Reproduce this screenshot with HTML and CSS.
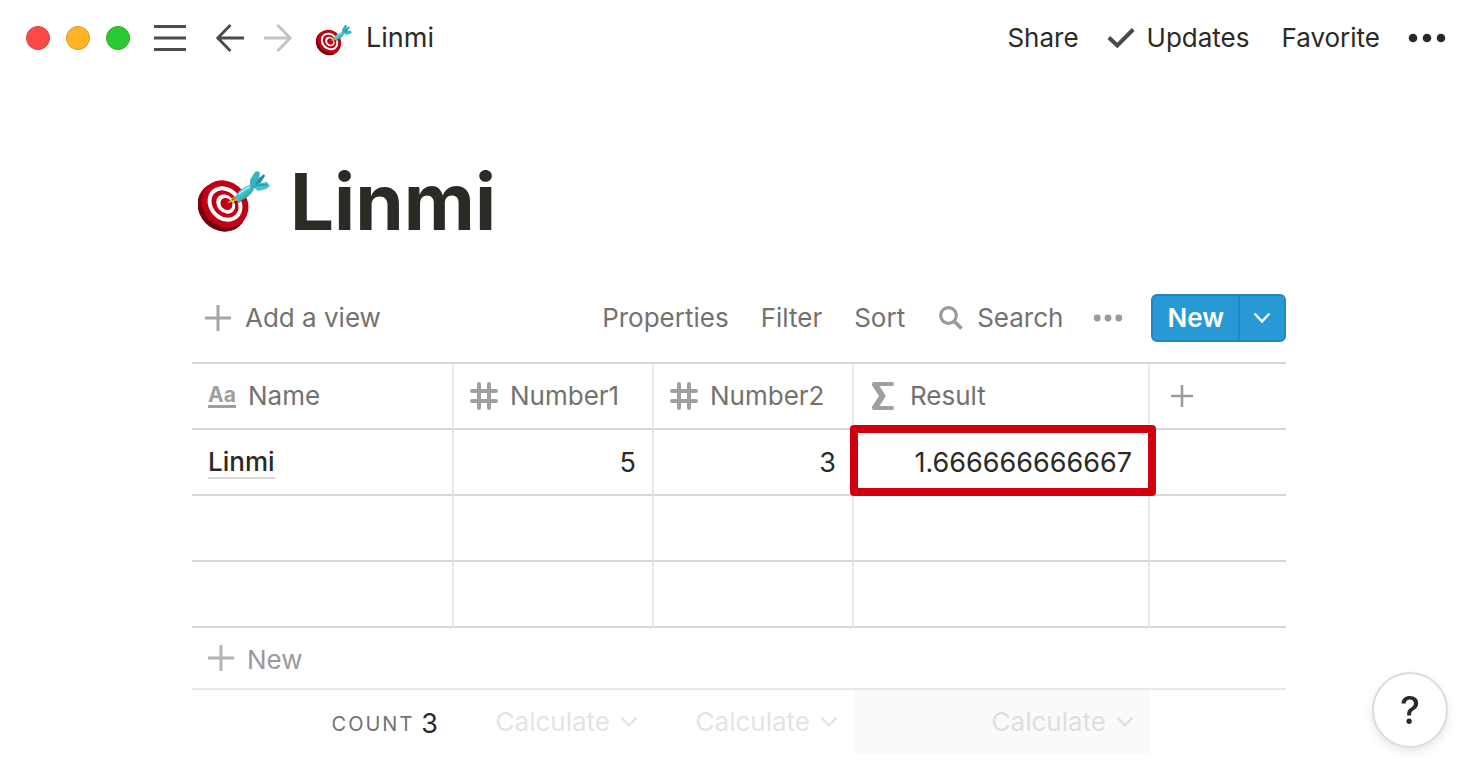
FILE: index.html
```html
<!DOCTYPE html>
<html lang="en">
<head>
<meta charset="utf-8">
<title>Linmi</title>
<meta name="viewport" content="width=device-width, initial-scale=1">
<link rel="stylesheet" href="styles.css">
</head>
<body>
<svg class="sprite" aria-hidden="true">
  <defs>
    <linearGradient id="rim" x1="0" y1="0" x2="1" y2="1"><stop offset="0" stop-color="#a80012"/><stop offset="1" stop-color="#5f0008"/></linearGradient>
    <linearGradient id="barrel" x1="0" y1="0" x2="1" y2="1"><stop offset="0" stop-color="#6fe0e6"/><stop offset=".5" stop-color="#3fbecb"/><stop offset="1" stop-color="#1c7f90"/></linearGradient>
    <symbol id="target" viewBox="0 0 72 62">
      <ellipse cx="24" cy="36" rx="26" ry="23" transform="rotate(47 24 36)" fill="url(#rim)"/>
      <g transform="rotate(47 27 33)">
        <ellipse cx="27" cy="33" rx="25" ry="22" fill="#c00015"/>
        <ellipse cx="27" cy="33" rx="19" ry="16" fill="#fff"/>
        <ellipse cx="27" cy="33" rx="15" ry="12" fill="#c00015"/>
        <ellipse cx="27.500" cy="32.500" rx="10.500" ry="8.500" fill="#fff"/>
        <ellipse cx="28" cy="32" rx="6.500" ry="5.500" fill="#c00015"/>
      </g>
      <path d="M30 33 48 25 42 32Z" fill="#7a0010" opacity=".45"/>
      <path d="M29 32.500 37 24.500 42 29 36 30Z" fill="#f0b51c"/>
      <path d="M34 29 40 25" stroke="#8a5a08" stroke-width="1.500"/>
      <path d="M37 28C38 21 45 16 52 14L56 18C54 23 46 30 40 30Z" fill="url(#barrel)"/>
      <path d="M52 15 52 9 57 1Q60 -1 62 2L60 11 55 17Z" fill="#38b4c1"/>
      <path d="M57 14 61 7 66 3 67 5 61 14Z" fill="#238d9b"/>
      <path d="M55 16 61 12 69 11 72 15 68 18 60 20Z" fill="#43c2cc"/>
      <path d="M54 17 60 14 69 14" fill="none" stroke="#1c8492" stroke-width="1"/>
      <path d="M41 23Q46 18 52 16" fill="none" stroke="#a2f2f2" stroke-width="1.500"/>
    </symbol>
    <symbol id="plus" viewBox="0 0 26 26"><path d="M13 0V26M0 13H26" stroke="currentColor" stroke-width="3"/></symbol>
    <symbol id="hash" viewBox="0 0 28 28"><path d="M9 2V26M19 2V26M2 9H26M2 19H26" stroke="currentColor" stroke-width="4" stroke-linecap="round"/></symbol>
    <symbol id="chevron" viewBox="0 0 18 12"><path d="M1.500 1.500 9 9.500 16.500 1.500" fill="none" stroke="currentColor" stroke-width="2.500"/></symbol>
    <symbol id="dots" viewBox="0 0 36 10"><circle cx="4.500" cy="5" r="4.300"/><circle cx="18" cy="5" r="4.300"/><circle cx="31.500" cy="5" r="4.300"/></symbol>
  </defs>
</svg>

<header class="topbar">
  <div class="lights">
    <button class="light light-close" aria-label="Close"></button>
    <button class="light light-minimize" aria-label="Minimize"></button>
    <button class="light light-zoom" aria-label="Zoom"></button>
  </div>
  <button class="menu" aria-label="Menu"><svg width="32" height="28" viewBox="0 0 32 28"><path d="M0 2.500H32M0 14H32M0 25.500H32" stroke="#4d4c46" stroke-width="3"/></svg></button>
  <div class="history">
    <button aria-label="Back"><svg width="28" height="28" viewBox="0 0 28 28"><path d="M28 14H2M14.500 1 1.800 14 14.500 27" fill="none" stroke="#4a4a48" stroke-width="2.800"/></svg></button>
    <button aria-label="Forward"><svg width="28" height="28" viewBox="0 0 28 28"><path d="M0 14H26M13.500 1 26.200 14 13.500 27" fill="none" stroke="#c3c3c2" stroke-width="2.800"/></svg></button>
  </div>
  <a class="crumb" href="#"><svg class="crumb-icon"><use href="#target"/></svg>Linmi</a>
  <nav class="actions">
    <button>Share</button>
    <button class="updates"><svg width="28" height="22" viewBox="0 0 28 22"><path d="M1.800 10.500 10.300 18.500 26.200 2.500" fill="none" stroke="#4a4a48" stroke-width="4"/></svg>Updates</button>
    <button>Favorite</button>
    <button class="more" aria-label="More"><svg width="38" height="10" viewBox="0 0 38 10"><circle cx="5" cy="5" r="4.300"/><circle cx="19" cy="5" r="4.300"/><circle cx="33" cy="5" r="4.300"/></svg></button>
  </nav>
</header>

<main class="page">
  <div class="heading">
    <svg class="heading-icon" aria-hidden="true"><use href="#target"/></svg>
    <h1>Linmi</h1>
  </div>

  <div class="toolbar">
    <button class="add-view"><svg class="plus"><use href="#plus"/></svg>Add a view</button>
    <div class="tools">
      <button>Properties</button>
      <button>Filter</button>
      <button>Sort</button>
      <button class="search"><svg width="24" height="24" viewBox="0 0 24 24"><circle cx="9.500" cy="9.500" r="7.800" fill="none" stroke="#9b9a97" stroke-width="3.200"/><path d="M15 15 22.500 22.500" stroke="#9b9a97" stroke-width="3.800"/></svg>Search</button>
      <button class="view-more" aria-label="View options"><svg width="30" height="8"><use href="#dots"/></svg></button>
      <div class="split">
        <button class="split-main">New</button>
        <button class="split-menu" aria-label="Templates"><svg width="18" height="12"><use href="#chevron"/></svg></button>
      </div>
    </div>
  </div>

  <table class="grid">
    <colgroup><col class="col-name"><col class="col-number"><col class="col-number"><col class="col-result"><col></colgroup>
    <thead>
      <tr>
        <th><span class="field"><span class="aa" aria-hidden="true">Aa</span>Name</span></th>
        <th><span class="field"><svg class="type"><use href="#hash"/></svg>Number1</span></th>
        <th><span class="field"><svg class="type"><use href="#hash"/></svg>Number2</span></th>
        <th><span class="field"><svg class="type" viewBox="0 0 28 28"><path d="M4 0H22Q24 0 24 2 24 4 22 4H9.500L15.500 13.500V14.500L9.500 24H22Q24 24 24 26 24 28 22 28H4Q2 28 2 26V24.500L9 14 2 3.500V2Q2 0 4 0Z" fill="currentColor"/></svg>Result</span></th>
        <th><button class="add-column" aria-label="Add a property"><svg width="22" height="22"><use href="#plus"/></svg></button></th>
      </tr>
    </thead>
    <tbody>
      <tr><td><a class="title" href="#">Linmi</a></td><td class="num">5</td><td class="num">3</td><td class="num marked">1.666666666667</td><td></td></tr>
      <tr><td></td><td></td><td></td><td></td><td></td></tr>
      <tr><td></td><td></td><td></td><td></td><td></td></tr>
    </tbody>
    <tfoot>
      <tr class="new-row"><td colspan="5"><button><svg class="plus"><use href="#plus"/></svg><span>New</span></button></td></tr>
      <tr class="totals">
        <td><span class="count"><span class="count-label">COUNT</span><span class="count-value">3</span></span></td>
        <td><button class="calc">Calculate<svg width="18" height="12"><use href="#chevron"/></svg></button></td>
        <td><button class="calc">Calculate<svg width="18" height="12"><use href="#chevron"/></svg></button></td>
        <td class="hovered"><button class="calc">Calculate<svg width="18" height="12"><use href="#chevron"/></svg></button></td>
        <td></td>
      </tr>
    </tfoot>
  </table>
</main>

<button class="help" aria-label="Help">?</button>
</body>
</html>
```

FILE: styles.css
```css
* { box-sizing: border-box; }

body {
  margin: 0;
  min-height: 100vh;
  background: #fff;
  color: #2b2a25;
  font: 400 26px/32px Inter, "Liberation Sans", sans-serif;
}

button {
  display: flex;
  align-items: center;
  margin: 0;
  padding: 0;
  border: 0;
  background: none;
  color: inherit;
  font: inherit;
  cursor: pointer;
}

a { color: inherit; text-decoration: none; }
svg { display: block; flex: none; }
.sprite { position: absolute; width: 0; height: 0; }

.topbar {
  display: flex;
  align-items: center;
  height: 76px;
  padding: 0 32px 0 26px;
}

.lights { display: flex; gap: 16px; }
.light { width: 24px; height: 24px; border: 1px solid; border-radius: 50%; }
.light-close { background: #fc4a48; border-color: #e0383a; }
.light-minimize { background: #fdb526; border-color: #df981c; }
.light-zoom { background: #2aca33; border-color: #1bac24; }
.menu { margin-left: 24px; }
.history { display: flex; gap: 20px; margin-left: 30px; }
.crumb { display: flex; align-items: center; gap: 14px; margin-left: 24px; font-size: 27px; }
.crumb-icon { width: 36px; height: 31px; margin-top: 4px; }
.actions { display: flex; align-items: center; gap: 32px; margin-left: auto; }
.updates { gap: 12px; margin-left: -4px; }
.more { margin-left: -4px; fill: #2b2a25; }

.page { padding: 88px 192px 0; }

.heading { display: flex; align-items: center; gap: 20px; height: 76px; }
.heading-icon { width: 72px; height: 62px; margin-left: 6px; }
h1 { margin: 0; font-size: 78px; line-height: 76px; font-weight: 700; }

.toolbar {
  display: flex;
  align-items: center;
  justify-content: space-between;
  margin: 54px 0 20px;
  color: #73726e;
}
.plus { width: 26px; height: 26px; color: #a7a6a3; }
.add-view { gap: 14px; padding-left: 13px; }
.tools { display: flex; align-items: center; gap: 32px; }
.search { gap: 14px; margin-left: 2px; }
.view-more { fill: #9b9a97; margin: 0 -4px 0 -2px; }

.split {
  display: flex;
  height: 48px;
  border: 2px solid #2388bd;
  border-radius: 6px;
  background: #2799d5;
  color: #fff;
  font-weight: 600;
}
.split-main { padding: 0 14px; }
.split-menu { padding: 0 13px; border-left: 2px solid #2388bd; }

.grid {
  width: 100%;
  table-layout: fixed;
  border-collapse: separate;
  border-spacing: 0;
  border-top: 2px solid #d8d8d7;
}
.col-name { width: 262px; }
.col-number { width: 200px; }
.col-result { width: 296px; }

th, td {
  height: 66px;
  padding: 0 16px;
  border-right: 2px solid #e8e8e7;
  border-bottom: 2px solid #d8d8d7;
  text-align: left;
  font-weight: 400;
}
th:last-child, td:last-child { border-right: 0; }
th { color: #73726e; }

.field { display: flex; align-items: center; gap: 12px; }
.type { width: 28px; height: 28px; color: #a09f9c; }
.aa {
  width: 28px;
  border-bottom: 3px solid #a09f9c;
  color: #a09f9c;
  font-size: 21px;
  line-height: 21px;
  font-weight: 700;
}
.add-column { margin-left: 5px; color: #9b9a97; }
.title { border-bottom: 2px solid #d8d8d7; font-weight: 500; line-height: 30px; }
.num { padding-top: 2px; font-size: 27px; text-align: right; }

.marked { position: relative; }
.marked::after {
  content: "";
  position: absolute;
  inset: -5px -8px -2px -4px;
  border: 8px solid #d0000f;
  border-radius: 4px;
}

.new-row td { height: 62px; border-bottom-color: #e8e8e7; }
.new-row button { gap: 13px; color: #9b9a97; }
.new-row span { padding-top: 4px; }
.new-row .plus { color: #b5b4b2; }

.totals td { height: 64px; border: 0; }
.count {
  display: flex;
  align-items: center;
  justify-content: flex-end;
  gap: 7px;
  padding-top: 4px;
}
.count-label { color: #73726e; font-size: 20px; letter-spacing: 2px; }
.count-value { font-size: 27px; }
.calc { gap: 10px; margin-left: auto; color: #e4e4e3; }
.hovered { background: #fafafa; }
.hovered .calc { color: #dfdfde; }

.help {
  position: fixed;
  right: 30px;
  bottom: 30px;
  justify-content: center;
  width: 76px;
  height: 76px;
  border: 2px solid #dcdcdb;
  border-radius: 50%;
  background: #fff;
  box-shadow: 0 4px 8px rgba(15, 15, 15, 0.1);
  font-size: 38px;
  font-weight: 500;
}
```
